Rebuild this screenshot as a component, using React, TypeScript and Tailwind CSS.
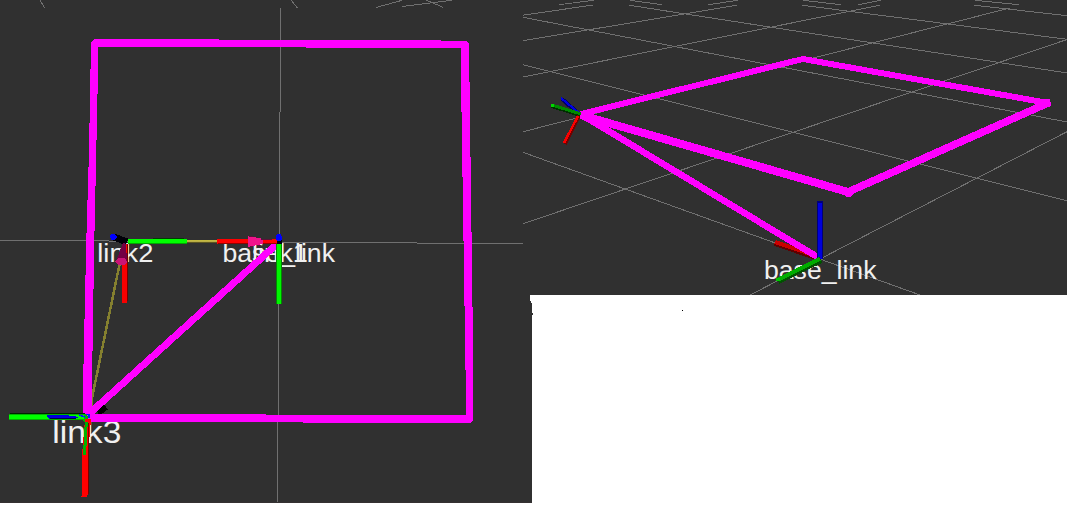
type Line = [number, number, number, number];

const leftGrid: Line[] = [
  [40, 0, 44.5, 8],
  [291, 0, 297.5, 8],
  [376, 7.5, 402, 0.3],
  [402, 6.5, 452, 0.3],
  [426, 0, 443.5, 7.5],
  [0, 240.3, 523, 243.7],
  [280.7, 8, 277.5, 502],
];

const rightGrid: Line[] = [
  [523, 15.2, 593, 5],
  [559, 4.7, 594, 0.3],
  [630, 0.3, 662, 4.7],
  [629, 5.2, 1067, 73],
  [708, 4.7, 738, 0.3],
  [523, 40.7, 737, 5.2],
  [523, 17.3, 1067, 122],
  [523, 77, 880, 5.2],
  [523, 64.7, 1067, 200.7],
  [523, 131.7, 1010, 8],
  [803, 0.3, 841, 4.7],
  [858, 4.7, 881, 0.3],
  [802, 5.2, 1067, 39.3],
  [975, 0.3, 1019, 4.7],
  [974, 5.2, 1067, 15.7],
  [523, 223.7, 1067, 39.5],
  [1067, 131.7, 750, 295],
  [523, 152.3, 920, 295],
];

function Grid({ lines }: { lines: Line[] }) {
  return (
    <g stroke="#707070" strokeWidth="1" shapeRendering="crispEdges">
      {lines.map(([x1, y1, x2, y2], i) => (
        <line key={i} x1={x1} y1={y1} x2={x2} y2={y2} />
      ))}
    </g>
  );
}

function Label({ x, y, width, size, children }: { x: number; y: number; width: number; size: number; children: string }) {
  return (
    <text x={x} y={y} fontSize={size} textLength={width} lengthAdjust="spacingAndGlyphs" fill="#f0f0f0">
      {children}
    </text>
  );
}

function TopView() {
  return (
    <svg viewBox="0 0 532 503" className="block h-full w-full font-['Liberation_Sans',sans-serif]">
      <Grid lines={leftGrid} />
      <path d="M530 295H532V303H531V301H530Z" fill="#fff" shapeRendering="crispEdges" />
      <rect y="502" width="532" height="1" fill="#353132" />
      <Label x={97.3} y={262} width={56} size={26}>link2</Label>
      <Label x={222.5} y={262} width={112.5} size={26}>base_link</Label>
      <Label x={252} y={262} width={56} size={26}>link1</Label>
      <Label x={52.3} y={442.7} width={69} size={32}>link3</Label>
      <g shapeRendering="crispEdges">
        <path d="M217 240.500H186" stroke="#c2b83f" strokeWidth="1" />
        <path d="M217 241.500H186" stroke="#b9ad45" strokeWidth="1" />
        <path d="M186 242.500H217" stroke="#5c5622" strokeWidth="1" />
        <path d="M120 262L92 398V414" stroke="#85802f" strokeWidth="2.5" fill="none" />
        <path d="M98 413L106 407" stroke="#000" strokeWidth="6" />
        <path
          d="M91 42L94 39H219V40H441V41H466L469 44L473 343V420L471 423H303V422H88L83 416V386L86.300 240L89 150ZM98.500 47L96.300 150L94.300 240L91.500 414H266V415H466V402L461 79V48H306V47Z"
          fill="#f0f"
          fillRule="evenodd"
        />
        <path d="M90 413L278 243" stroke="#f0f" strokeWidth="7" />

        <path d="M153 238.500H184" stroke="#003d00" strokeWidth="1" />
        <path d="M128 241.500H187" stroke="#00ff00" strokeWidth="5" />
        <path d="M128 243.500H187" stroke="#00a800" strokeWidth="1" />
        <path d="M114 237L127 242" stroke="#000008" strokeWidth="7" />
        <path d="M110 236L111 234H115L117 237L115 240H111Z" fill="#0000ff" />
        <path d="M122 244V303H127V244Z" fill="#f80000" />
        <path d="M127 244V301" stroke="#730000" strokeWidth="1" />
        <path d="M123 243L116 261L120 265H125L127 262L126 244Z" fill="#720044" />
        <path d="M115 261L118 258H125L127 262L124 265H118Z" fill="#c91476" />

        <path d="M217 241.500H277" stroke="#ff0000" strokeWidth="5" />
        <path d="M218 243.500H277" stroke="#920000" strokeWidth="1" />
        <path d="M248 236L263 239V244L248 247Z" fill="#f0148c" />
        <path d="M249 236.500H253M256 237.500H257M261 239.500H272M250 246.500H253M257 245.500H261" stroke="#5c1038" strokeWidth="1" />
        <rect x="276" y="244" width="6" height="60" fill="#008a00" />
        <rect x="277" y="244" width="4" height="60" fill="#00f400" />
        <rect x="277" y="239" width="5" height="5" fill="#000010" />
        <path d="M276 236L277 234H281L282 237V239L280 241H277L276 239Z" fill="#0000ff" />

        <path d="M10 413.500H85" stroke="#002400" strokeWidth="1" />
        <path d="M9 417H84L87 420" stroke="#00b400" strokeWidth="6" fill="none" />
        <path d="M9 417H84" stroke="#00ff00" strokeWidth="4" />
        <path d="M47 414.500L66 415L79 417L73 419H49L47 417Z" fill="#0000e0" />
        <path d="M50 418.500H76" stroke="#00004d" />
        <path d="M88 419L85 455L84.500 497" stroke="#ff0000" strokeWidth="6" fill="none" />
        <path d="M88.500 423V494" stroke="#760000" strokeWidth="1" />
        <path d="M86.300 422L84.500 455" stroke="#00b000" strokeWidth="3" />
        <path d="M79 415L85 417M86 414.500H89V418" stroke="#0022f8" strokeWidth="1.500" fill="none" />
      </g>
    </svg>
  );
}

function PerspectiveView() {
  return (
    <svg viewBox="523 0 544 295" className="block h-full w-full font-['Liberation_Sans',sans-serif]">
      <Grid lines={rightGrid} />
      <Label x={764} y={279.3} width={112.5} size={26}>base_link</Label>
      <g shapeRendering="crispEdges">
        <path d="M775 243L819 258" stroke="#5d0000" strokeWidth="6" />
        <path d="M775 242L819 257" stroke="#cb0000" strokeWidth="4" />
        <path d="M582 115L819 258" stroke="#f0f" strokeWidth="6.500" />
        <path d="M581 115L848 192" stroke="#f0f" strokeWidth="8" />
        <path d="M848 192L1048 103" stroke="#f0f" strokeWidth="7.500" />
        <path d="M845 188H851L853 194L850 197H846L843 194Z" fill="#f0f" />
        <path d="M581 114L803 59L1048 103" fill="none" stroke="#f0f" strokeWidth="6" strokeLinejoin="round" />
        <path d="M1045 99H1050V102H1051V106L1046 108Z" fill="#f0f" />
        <path d="M580 111L587 110V122L580 118Z" fill="#f0f" />
        <path d="M562 99L579 114" stroke="#000067" strokeWidth="4" />
        <path d="M561 98L579 113" stroke="#0000e5" strokeWidth="2" />
        <path d="M552 106L580 115" stroke="#003000" strokeWidth="4" />
        <path d="M552 105L581 114" stroke="#008c00" strokeWidth="3" />
        <rect x="551" y="104" width="3" height="3" fill="#00da00" />
        <path d="M579 116L565 144" stroke="#730000" strokeWidth="4" />
        <path d="M578 116L564 143" stroke="#f80000" strokeWidth="2.500" />
        <path d="M817 201H823V259H817Z" fill="#000078" />
        <path d="M818 203H822V259H818Z" fill="#0000dc" />
        <path d="M778 281L821 260" stroke="#005200" strokeWidth="6" />
        <path d="M777 280L820 259" stroke="#00ac00" strokeWidth="4" />
        <rect x="776" y="278" width="4" height="3" fill="#00c600" />
      </g>
    </svg>
  );
}

export default function App() {
  return (
    <main className="flex h-[507px] w-[1067px] items-start overflow-hidden bg-white">
      <section className="h-[503px] w-[532px] shrink-0 bg-[#303030]">
        <TopView />
      </section>
      <section className="-ml-[9px] flex h-[507px] w-[544px] shrink-0 flex-col">
        <div className="h-[295px] w-full shrink-0 bg-[#303030]">
          <PerspectiveView />
        </div>
        <div className="flex pt-[15px] pl-[9px]">
          <div className="mt-[3px] h-[2px] w-px bg-[#303030]" />
          <div className="ml-[149px] h-px w-px bg-black" />
        </div>
      </section>
    </main>
  );
}
